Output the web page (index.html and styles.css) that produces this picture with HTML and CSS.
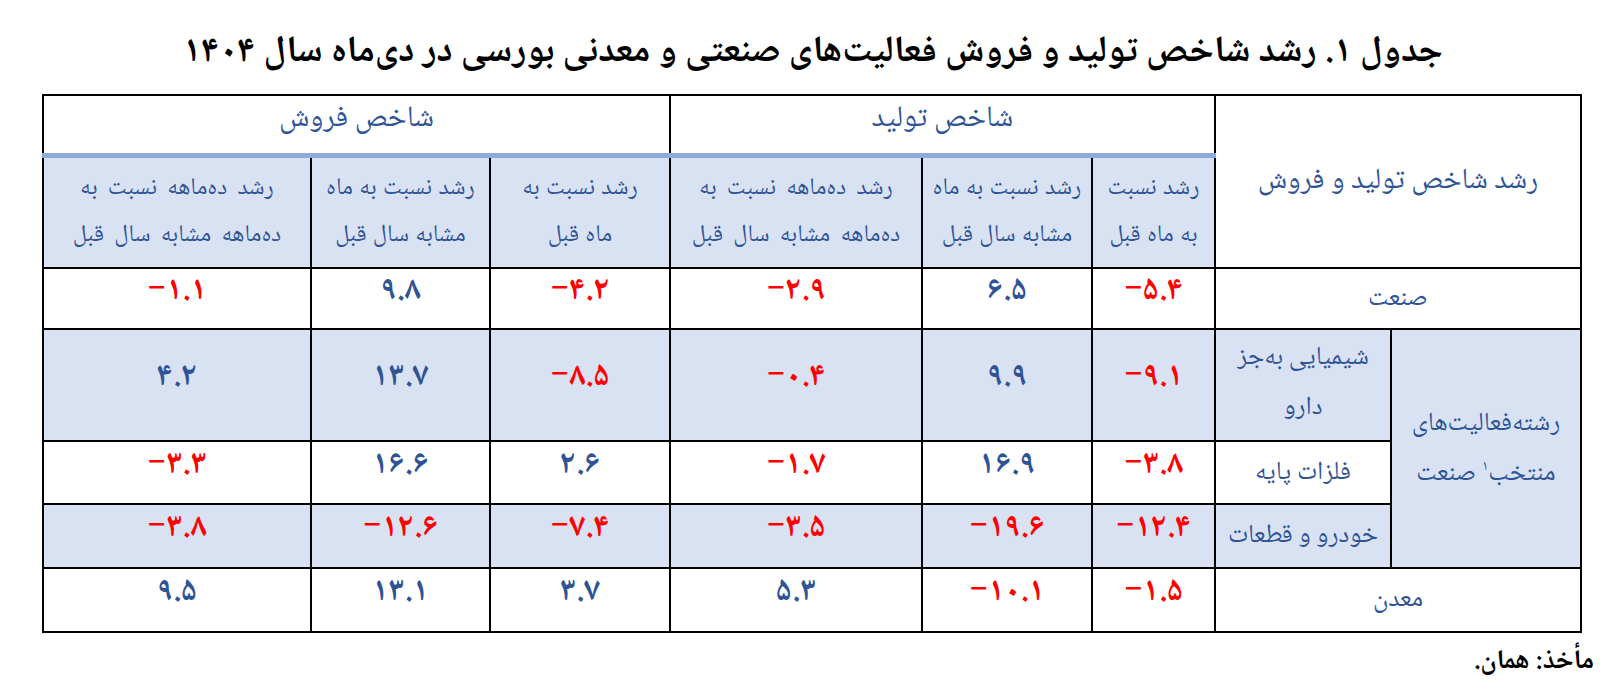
FILE: index.html
```html
<!DOCTYPE html>
<html lang="fa" dir="rtl">
<head>
<meta charset="utf-8">
<title>جدول ۱</title>
<link rel="stylesheet" href="styles.css">
</head>
<body>
<div class="page">
  <h1 class="title">جدول ۱. رشد شاخص تولید و فروش فعالیت‌های صنعتی و معدنی بورسی در دی‌ماه سال ۱۴۰۴</h1>
  <table class="grid">
    <colgroup>
      <col class="w-l1"><col class="w-l2"><col class="w-c1"><col class="w-c2"><col class="w-c3"><col class="w-s1"><col class="w-s2"><col class="w-s3">
    </colgroup>
    <thead>
      <tr class="row-group">
        <th rowspan="2" colspan="2" class="corner">رشد شاخص تولید و فروش</th>
        <th colspan="3" class="group">شاخص تولید</th>
        <th colspan="3" class="group">شاخص فروش</th>
      </tr>
      <tr class="row-sub">
        <th class="sub">رشد نسبت<br>به ماه قبل</th>
        <th class="sub">رشد نسبت به ماه<br>مشابه سال قبل</th>
        <th class="sub wide">رشد ده‌ماهه نسبت به<br>ده‌ماهه مشابه سال قبل</th>
        <th class="sub">رشد نسبت به<br>ماه قبل</th>
        <th class="sub">رشد نسبت به ماه<br>مشابه سال قبل</th>
        <th class="sub wide">رشد ده‌ماهه نسبت به<br>ده‌ماهه مشابه سال قبل</th>
      </tr>
    </thead>
    <tbody>
      <tr class="row-1">
        <th colspan="2" class="label">صنعت</th>
        <td class="num neg">−۵.۴</td>
        <td class="num">۶.۵</td>
        <td class="num neg">−۲.۹</td>
        <td class="num neg">−۴.۲</td>
        <td class="num">۹.۸</td>
        <td class="num neg">−۱.۱</td>
      </tr>
      <tr class="row-2 shade">
        <th rowspan="3" class="label sector">رشته‌فعالیت‌های<br>منتخب<sup>۱</sup> صنعت</th>
        <th class="label two">شیمیایی به‌جز<br>دارو</th>
        <td class="num neg">−۹.۱</td>
        <td class="num">۹.۹</td>
        <td class="num neg">−۰.۴</td>
        <td class="num neg">−۸.۵</td>
        <td class="num">۱۳.۷</td>
        <td class="num">۴.۲</td>
      </tr>
      <tr class="row-3">
        <th class="label">فلزات پایه</th>
        <td class="num neg">−۳.۸</td>
        <td class="num">۱۶.۹</td>
        <td class="num neg">−۱.۷</td>
        <td class="num">۲.۶</td>
        <td class="num">۱۶.۶</td>
        <td class="num neg">−۳.۳</td>
      </tr>
      <tr class="row-4 shade">
        <th class="label">خودرو و قطعات</th>
        <td class="num neg">−۱۲.۴</td>
        <td class="num neg">−۱۹.۶</td>
        <td class="num neg">−۳.۵</td>
        <td class="num neg">−۷.۴</td>
        <td class="num neg">−۱۲.۶</td>
        <td class="num neg">−۳.۸</td>
      </tr>
      <tr class="row-5">
        <th colspan="2" class="label">معدن</th>
        <td class="num neg">−۱.۵</td>
        <td class="num neg">−۱۰.۱</td>
        <td class="num">۵.۳</td>
        <td class="num">۳.۷</td>
        <td class="num">۱۳.۱</td>
        <td class="num">۹.۵</td>
      </tr>
    </tbody>
  </table>
  <p class="source">مأخذ: همان.</p>
</div>
</body>
</html>
```

FILE: styles.css
```css
html, body {
  margin: 0;
  padding: 0;
  background: #ffffff;
}

body {
  font-family: "Noto Naskh Arabic", "Noto Sans Arabic", "DejaVu Sans", sans-serif;
  color: #000000;
}

.page {
  width: 1538px;
  margin: 0 auto 0 44px;
  padding-top: 31px;
}

.title {
  margin: 0 0 19px 0;
  height: 44px;
  line-height: 44px;
  font-size: 37px;
  font-weight: bold;
  text-align: center;
  color: #000000;
}

.grid {
  width: 1538px;
  border-collapse: collapse;
  table-layout: fixed;
}

.w-l1 { width: 190px; }
.w-l2 { width: 176px; }
.w-c1 { width: 123px; }
.w-c2 { width: 170px; }
.w-c3 { width: 252px; }
.w-s1 { width: 180px; }
.w-s2 { width: 179px; }
.w-s3 { width: 268px; }

.grid th,
.grid td {
  border: 2px solid #000000;
  padding: 0;
  text-align: center;
  vertical-align: middle;
  color: #2f5496;
  font-weight: normal;
  white-space: nowrap;
}

.row-group { height: 60px; }
.row-sub { height: 113px; }
.row-1 { height: 61px; }
.row-2 { height: 112px; }
.row-3 { height: 63px; }
.row-4 { height: 64px; }
.row-5 { height: 64px; }

.corner {
  font-size: 29px;
  line-height: 40px;
  background: #ffffff;
}

.group {
  font-size: 30px;
  line-height: 40px;
  padding-bottom: 8px !important;
  border-bottom: 5px solid #8eaadb !important;
  background: #ffffff;
}

.sub {
  font-size: 24px;
  line-height: 47px;
  background: #d9e2f3;
  word-spacing: 1px;
}

.sub.wide {
  word-spacing: 5px;
}

.shade th,
.shade td {
  background: #d9e2f3;
}

.label {
  font-size: 26px;
  line-height: 40px;
}

.label.two {
  line-height: 50px;
  padding-bottom: 4px !important;
}

.label.sector {
  background: #d9e2f3;
  line-height: 50px;
}

.label sup {
  font-size: 14px;
  vertical-align: 10px;
  line-height: 0;
}

.num {
  direction: ltr;
  font-size: 33px;
  line-height: 40px;
  font-weight: bold !important;
  padding-bottom: 14px !important;
}

.num.neg {
  color: #ff0000;
}

.source {
  margin: 13px -12px 0 0;
  font-size: 27px;
  font-weight: bold;
  line-height: 32px;
  text-align: right;
}
```
